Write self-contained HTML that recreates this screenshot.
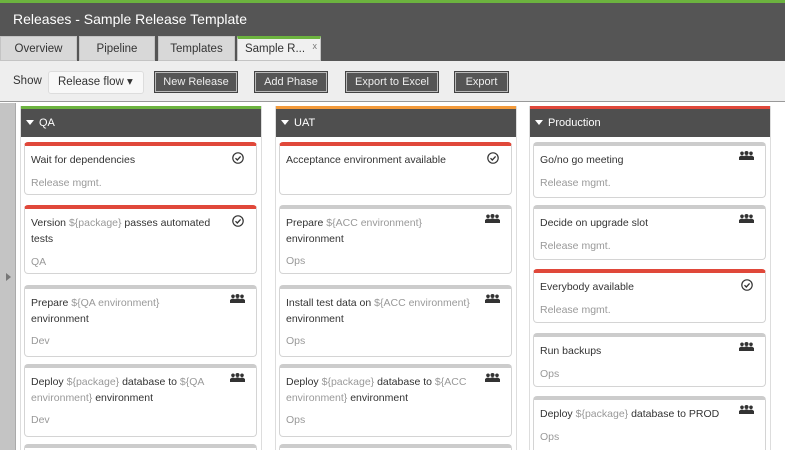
<!DOCTYPE html>
<html style="overflow:hidden;height:450px"><head><style>
*{box-sizing:border-box;margin:0;padding:0}
html,body{width:785px;height:450px;overflow:hidden}
body{background:#fff;font-family:"Liberation Sans",sans-serif;position:relative}
.a{position:absolute}
.tab{position:absolute;top:36px;height:25px;background:#d8d8d8;border:1px solid #c4c4c4;font-size:11.5px;color:#333;text-align:center;line-height:24px}
.btn{position:absolute;top:72px;height:20px;background:#555;color:#eee;font-size:11px;text-align:center;line-height:18px;border:1px solid #bbb;outline:1px solid #444}
.col{position:absolute;top:106px;width:242px;height:344px;border:1px solid #ddd;border-top:none;border-bottom:none;background:#fff;overflow:hidden}
.col .bar{height:3px}
.col .hd{height:28px;background:#4f4f4f;color:#fff;font-size:11px;line-height:28px;padding-left:18px;position:relative}
.col .hd:before{content:"";position:absolute;left:5px;top:11px;border-left:4px solid transparent;border-right:4px solid transparent;border-top:5px solid #fff}
.card{position:absolute;left:3px;width:233px;border:1px solid #d4d4d4;border-top:4px solid #ccc;border-radius:4px;background:#fff;padding:6px 30px 0 6px;font-size:10.5px;color:#333;line-height:16px}
.card.r{border-top-color:#e0483a}
.card .s{color:#999;margin-top:7px}
.v{color:#999}
.ic{position:absolute;right:12px;top:6px;width:12px;height:12px}
.grp{position:absolute;right:11px;top:5px;width:15px;height:9px}
</style></head><body>
<div class="a" style="left:0;top:0;width:785px;height:3px;background:#6cb33f"></div>
<div class="a" style="left:0;top:3px;width:785px;height:58px;background:#555"></div>
<div class="a" style="left:13px;top:11px;color:#fff;font-size:14px">Releases - Sample Release Template</div>
<div class="tab" style="left:0;width:77px">Overview</div>
<div class="tab" style="left:79px;width:76px">Pipeline</div>
<div class="tab" style="left:158px;width:77px">Templates</div>
<div class="tab" style="left:237px;width:84px;background:#f0f0f0;border-top:3px solid #6cb33f;line-height:20px;padding-right:8px">Sample R...<span style="position:absolute;right:3px;top:0;font-size:9px;color:#777;line-height:14px">x</span></div>
<div class="a" style="left:0;top:61px;width:785px;height:41px;background:#eee;border-bottom:1px solid #999"></div>
<div class="a" style="left:13px;top:75px;font-size:11.5px;color:#333">Show</div>
<div class="a" style="left:48px;top:71px;width:96px;height:23px;background:#f8f8f8;border:1px solid #ddd;border-radius:3px;font-size:11.5px;line-height:21px;padding-left:9px;color:#333">Release flow ▾</div>
<div class="btn" style="left:155px;width:82px">New Release</div>
<div class="btn" style="left:255px;width:72px">Add Phase</div>
<div class="btn" style="left:346px;width:92px">Export to Excel</div>
<div class="btn" style="left:455px;width:53px">Export</div>
<div class="a" style="left:0;top:103px;width:16px;height:347px;background:#c4c4c4;border-right:1px solid #aaa"></div>
<div class="a" style="left:6px;top:273px;border-top:4px solid transparent;border-bottom:4px solid transparent;border-left:5px solid #777"></div>

<svg width="0" height="0" style="position:absolute;top:0;left:0"><defs>
<symbol id="ck" viewBox="0 0 12 12"><circle cx="6" cy="6" r="5.2" fill="none" stroke="#333" stroke-width="1.2"/><path d="M3.5 6.2l1.8 1.8 3.3-3.6" fill="none" stroke="#333" stroke-width="1.3"/></symbol>
<symbol id="gp" viewBox="0 0 15 9"><g fill="#333"><circle cx="3" cy="2.3" r="1.8"/><circle cx="7.5" cy="2" r="2"/><circle cx="12" cy="2.3" r="1.8"/><path d="M0 9v-3q3-3 6 0v3zM4 9v-3q3.5-3.5 7 0v3zM9 9v-3q3-3 6 0v3z"/></g></symbol>
</defs></svg>

<div class="col" style="left:20px"><div class="bar" style="background:#6cb33f"></div><div class="hd">QA</div>
<div class="card r" style="top:36px;height:53px">Wait for dependencies<div class="s">Release mgmt.</div><svg class="ic"><use href="#ck"/></svg></div>
<div class="card r" style="top:99px;height:69px">Version <span class="v">${package}</span> passes automated tests<div class="s">QA</div><svg class="ic"><use href="#ck"/></svg></div>
<div class="card" style="top:179px;height:72px">Prepare <span class="v">${QA environment}</span><br>environment<div class="s" style="margin-top:6px">Dev</div><svg class="grp"><use href="#gp"/></svg></div>
<div class="card" style="top:258px;height:73px">Deploy <span class="v">${package}</span> database to <span class="v">${QA environment}</span> environment<div class="s" style="margin-top:6px">Dev</div><svg class="grp"><use href="#gp"/></svg></div>
<div class="card" style="top:338px;height:6px;border-bottom:none;border-radius:4px 4px 0 0"></div>
</div>

<div class="col" style="left:275px"><div class="bar" style="background:#f39a3a"></div><div class="hd">UAT</div>
<div class="card r" style="top:36px;height:53px">Acceptance environment available<div class="s">&nbsp;</div><svg class="ic"><use href="#ck"/></svg></div>
<div class="card" style="top:99px;height:69px">Prepare <span class="v">${ACC environment}</span> environment<div class="s" style="margin-top:6px">Ops</div><svg class="grp"><use href="#gp"/></svg></div>
<div class="card" style="top:179px;height:72px">Install test data on <span class="v">${ACC environment}</span> environment<div class="s" style="margin-top:6px">Ops</div><svg class="grp"><use href="#gp"/></svg></div>
<div class="card" style="top:258px;height:73px">Deploy <span class="v">${package}</span> database to <span class="v">${ACC environment}</span> environment<div class="s" style="margin-top:6px">Ops</div><svg class="grp"><use href="#gp"/></svg></div>
<div class="card" style="top:338px;height:6px;border-bottom:none;border-radius:4px 4px 0 0"></div>
</div>

<div class="col" style="left:529px"><div class="bar" style="background:#e0483a"></div><div class="hd">Production</div>
<div class="card" style="top:36px;height:56px">Go/no go meeting<div class="s">Release mgmt.</div><svg class="grp"><use href="#gp"/></svg></div>
<div class="card" style="top:99px;height:55px">Decide on upgrade slot<div class="s">Release mgmt.</div><svg class="grp"><use href="#gp"/></svg></div>
<div class="card r" style="top:163px;height:54px">Everybody available<div class="s">Release mgmt.</div><svg class="ic"><use href="#ck"/></svg></div>
<div class="card" style="top:227px;height:54px">Run backups<div class="s">Ops</div><svg class="grp"><use href="#gp"/></svg></div>
<div class="card" style="top:290px;height:54px;border-bottom:none;border-radius:4px 4px 0 0">Deploy <span class="v">${package}</span> database to PROD<div class="s">Ops</div><svg class="grp"><use href="#gp"/></svg></div>
</div>
</body></html>
